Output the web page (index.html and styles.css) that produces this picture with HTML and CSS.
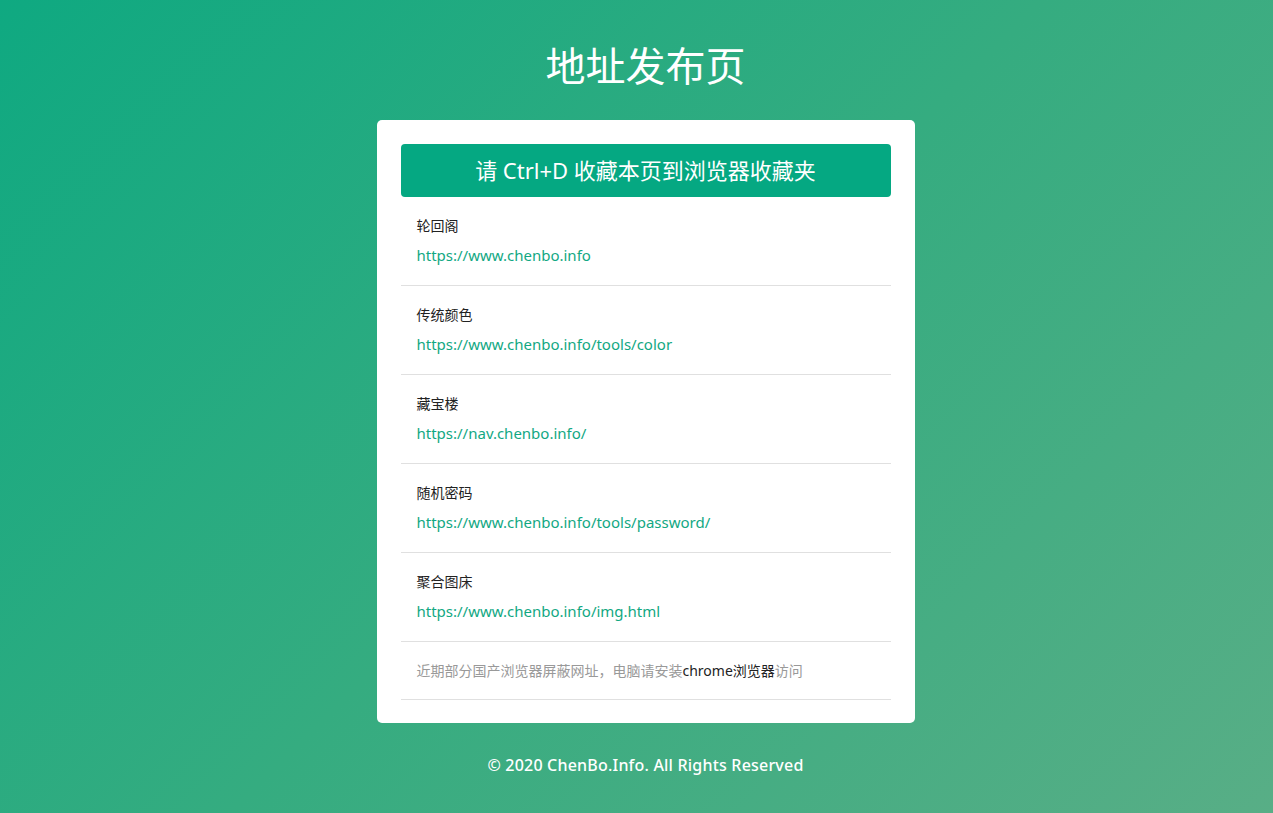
FILE: index.html
```html
<!DOCTYPE html>
<html lang="zh-CN">
<head>
<meta charset="utf-8">
<title>地址发布页</title>
<link rel="stylesheet" href="styles.css">
</head>
<body>
<div class="page">
  <h1 class="title">地址发布页</h1>
  <div class="card">
    <div class="notice">请 Ctrl+D 收藏本页到浏览器收藏夹</div>
    <ul class="list">
      <li class="item"><div class="label">轮回阁</div><a class="link" href="#">https://www.chenbo.info</a></li>
      <li class="item"><div class="label">传统颜色</div><a class="link" href="#">https://www.chenbo.info/tools/color</a></li>
      <li class="item"><div class="label">藏宝楼</div><a class="link" href="#">https://nav.chenbo.info/</a></li>
      <li class="item"><div class="label">随机密码</div><a class="link" href="#">https://www.chenbo.info/tools/password/</a></li>
      <li class="item"><div class="label">聚合图床</div><a class="link" href="#">https://www.chenbo.info/img.html</a></li>
      <li class="item tip">近期部分国产浏览器屏蔽网址，电脑请安装<span class="dark">chrome浏览器</span>访问</li>
    </ul>
  </div>
  <footer class="footer">© 2020 ChenBo.Info. All Rights Reserved</footer>
</div>
</body>
</html>
```
FILE: styles.css
```css
html, body {
  margin: 0;
  padding: 0;
  height: 100%;
}
body {
  font-family: "Noto Sans", "Noto Sans CJK SC", sans-serif;
  background: linear-gradient(135deg, #0fa981 0%, #35ac80 50%, #58ae86 100%);
  min-height: 813px;
  color: #222;
}
.page {
  display: flex;
  flex-direction: column;
  align-items: center;
  padding-left: 18px;
}
.title {
  margin: 38px 0 26px;
  font-size: 40px;
  line-height: 56px;
  font-weight: normal;
  color: #fff;
}
.card {
  width: 490px;
  padding: 24px 24px 23px;
  background: #fff;
  border-radius: 5px;
}
.notice {
  height: 53px;
  line-height: 53px;
  background: #05a882;
  border-radius: 4px;
  color: #fff;
  font-size: 22px;
  text-align: center;
}
.list {
  list-style: none;
  margin: 0;
  padding: 0;
}
.item {
  padding: 19px 16px 18px;
  border-bottom: 1px solid #e0e0e0;
}
.label {
  font-size: 14px;
  line-height: 20px;
  color: #222;
}
.link {
  display: block;
  margin-top: 7px;
  font-size: 15px;
  line-height: 24px;
  color: #12a883;
  text-decoration: none;
}
.tip {
  font-size: 14px;
  line-height: 20px;
  color: #999;
}
.dark {
  color: #222;
}
.footer {
  margin-top: 30px;
  font-size: 16px;
  line-height: 24px;
  font-weight: 500;
  letter-spacing: 0.2px;
  color: #fff;
}
```
